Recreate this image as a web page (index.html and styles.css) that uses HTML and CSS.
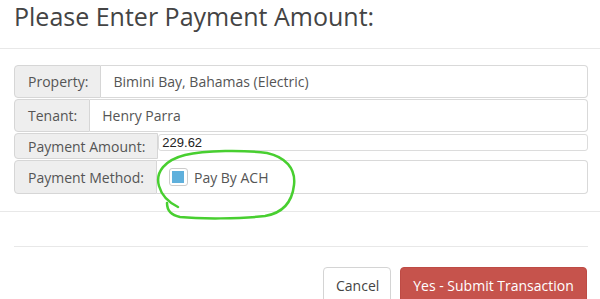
FILE: index.html
```html
<!DOCTYPE html>
<html lang="en">
<head>
    <meta charset="UTF-8">
    <title>Payment</title>
    <link rel="stylesheet" href="styles.css">
</head>
<body>
    <div class="modal">
        <div class="modal-header">
            <h1>Please Enter Payment Amount:</h1>
        </div>
        <div class="modal-body">
            <div class="row">
                <span class="addon">Property:</span>
                <div class="field">Bimini Bay, Bahamas (Electric)</div>
            </div>
            <div class="row">
                <span class="addon">Tenant:</span>
                <div class="field">Henry Parra</div>
            </div>
            <div class="row row-amount">
                <span class="addon">Payment Amount:</span>
                <input class="amount" type="text" value="229.62">
            </div>
            <div class="row row-method">
                <span class="addon">Payment Method:</span>
                <div class="field method">
                    <span class="check"><span class="check-fill"></span></span>
                    <span>Pay By ACH</span>
                </div>
            </div>
        </div>
        <div class="spacer"></div>
        <div class="modal-footer">
            <button class="btn btn-cancel">Cancel</button>
            <button class="btn btn-submit">Yes - Submit Transaction</button>
        </div>
    </div>
    <!-- hand drawn marker circle -->
    <svg class="scribble" width="600" height="299" viewBox="0 0 600 299">
        <path d="M178,207 C170,203 162,197 159,186 C155,172 165,160 185,155 C205,150 245,150 267,153 C285,157 296,168 294,185 C292,203 283,213 265,216 C240,219 200,219 180,217 C170,215 167,210 167,203"
              fill="none" stroke="#48cf30" stroke-width="2.5" stroke-linecap="round"/>
    </svg>
</body>
</html>
```

FILE: styles.css
```css
*{
    margin: 0;
    padding: 0;
    box-sizing: border-box;
}

html, body{
    overflow: hidden;
}

body{
    font-family: "Open Sans", "Liberation Sans", sans-serif;
    background-color: white;
    color: #555;
    position: relative;
    width: 600px;
    height: 299px;
}

.modal-header{
    padding: 3px 14px 18px;
    border-bottom: 1px solid #e8e8e8;
}
.modal-header h1{
    font-size: 25px;
    line-height: 27px;
    font-weight: normal;
    color: #444;
}

.modal-body{
    padding: 16px 12px 16px 14px;
    border-bottom: 1px solid #e8e8e8;
}

.row{
    display: flex;
    height: 33px;
    margin-bottom: 1px;
    font-size: 14px;
}
.addon{
    display: flex;
    align-items: center;
    padding: 0 12px 0 13px;
    background-color: #eee;
    border: 1px solid #d6d6d6;
    border-radius: 4px 0 0 4px;
    color: #555;
}
.field{
    flex: 1;
    display: flex;
    align-items: center;
    padding: 0 12px;
    border: 1px solid #d9d9d9;
    border-left: none;
    border-radius: 0 4px 4px 0;
    color: #555;
}

.row-amount{
    height: 26px;
    margin-top: 1px;
    align-items: flex-start;
}
.row-amount .addon{
    height: 26px;
}
.amount{
    flex: 1;
    height: 17px;
    margin-top: 1px;
    border: 1px solid #dcdcdc;
    border-radius: 3px;
    padding: 0 3px;
    font-family: "Liberation Sans", Arial, sans-serif;
    font-size: 13px;
    color: #222;
    outline: none;
}

.row-method{
    height: 34px;
}
.method{
    padding-left: 12px;
}
.check{
    width: 19px;
    height: 18px;
    border: 1px solid #ccc;
    border-radius: 3px;
    background-color: white;
    display: flex;
    align-items: center;
    justify-content: center;
    margin-right: 6px;
}
.check-fill{
    width: 12px;
    height: 12px;
    background-color: #5fb0dc;
}

.spacer{
    height: 35px;
    margin: 0 12px 0 14px;
    border-bottom: 1px solid #e8e8e8;
}

.modal-footer{
    display: flex;
    justify-content: flex-end;
    padding: 20px 13px 0 0;
}
.btn{
    font-family: "Open Sans", "Liberation Sans", sans-serif;
    font-size: 14px;
    height: 36px;
    padding: 0 12px;
    border-radius: 4px;
    cursor: pointer;
}
.btn-cancel{
    background-color: white;
    border: 1px solid #d4d4d4;
    color: #444;
    width: 68px;
}
.btn-submit{
    margin-left: 9px;
    background-color: #c6534c;
    border: 1px solid #be4b45;
    color: white;
    width: 187px;
}

.scribble{
    position: absolute;
    top: 0;
    left: 0;
    pointer-events: none;
}
```
